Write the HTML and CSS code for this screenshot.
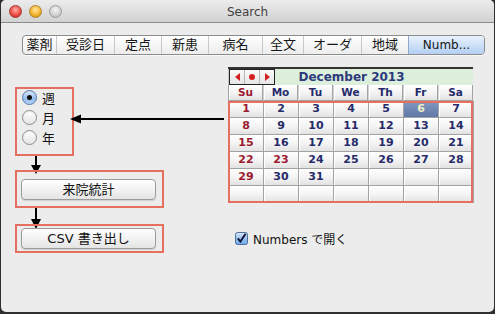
FILE: index.html
```html
<!DOCTYPE html>
<html lang="ja">
<head>
<meta charset="utf-8">
<title>Search</title>
<link rel="stylesheet" href="styles.css">
</head>
<body>
<div class="window">
  <div class="titlebar">
    <div class="lights">
      <span class="light red"></span>
      <span class="light yellow"></span>
      <span class="light gray"></span>
    </div>
    <div class="title">Search</div>
    <div></div>
  </div>
  <div class="content">
    <div class="tabs">
      <div class="seg">薬剤</div>
      <div class="seg">受診日</div>
      <div class="seg">定点</div>
      <div class="seg">新患</div>
      <div class="seg">病名</div>
      <div class="seg">全文</div>
      <div class="seg">オーダ</div>
      <div class="seg">地域</div>
      <div class="seg seg-sel">Numb...</div>
    </div>
    <div class="main">
      <div class="left">
        <div class="radio-row">
          <div class="box radios">
            <div class="radio-item"><span class="radio radio-on"><span class="dot"></span></span><span>週</span></div>
            <div class="radio-item"><span class="radio"></span><span>月</span></div>
            <div class="radio-item"><span class="radio"></span><span>年</span></div>
          </div>
          <svg class="arrow-h" width="154" height="12" viewBox="0 0 154 12">
            <line x1="9" y1="6" x2="154" y2="6" stroke="#000" stroke-width="2"/>
            <polygon points="0,6 11,1.5 11,10.5" fill="#000"/>
          </svg>
        </div>
        <svg class="arrow-v" width="12" height="14" viewBox="0 0 12 14">
          <line x1="6" y1="0" x2="6" y2="10" stroke="#000" stroke-width="2"/>
          <polygon points="1,9 11,9 6,18" fill="#000"/>
        </svg>
        <div class="box btnbox1"><button class="btn">来院統計</button></div>
        <svg class="arrow-v arrow-v2" width="12" height="16" viewBox="0 0 12 16">
          <line x1="6" y1="0" x2="6" y2="12" stroke="#000" stroke-width="2"/>
          <polygon points="1,11 11,11 6,21" fill="#000"/>
        </svg>
        <div class="box btnbox2"><button class="btn">CSV 書き出し</button></div>
      </div>
      <div class="right">
        <div class="calendar">
          <div class="cal-head">
            <div class="nav">
              <span class="nav-btn"><svg width="5" height="8" viewBox="0 0 5 8"><polygon points="0,4 5,0 5,8" fill="#d42020"/></svg></span>
              <span class="nav-btn"><svg width="6" height="6" viewBox="0 0 6 6"><circle cx="3" cy="3" r="3" fill="#d42020"/></svg></span>
              <span class="nav-btn"><svg width="5" height="8" viewBox="0 0 5 8"><polygon points="0,0 5,4 0,8" fill="#d42020"/></svg></span>
            </div>
            <div class="month">December 2013</div>
          </div>
          <div class="dow">
            <div class="dcell sun">Su</div>
            <div class="dcell">Mo</div>
            <div class="dcell">Tu</div>
            <div class="dcell">We</div>
            <div class="dcell">Th</div>
            <div class="dcell">Fr</div>
            <div class="dcell">Sa</div>
          </div>
          <div class="weeks">
            <div class="cell sun">1</div><div class="cell">2</div><div class="cell">3</div><div class="cell">4</div><div class="cell">5</div><div class="cell sel">6</div><div class="cell">7</div>
            <div class="cell sun">8</div><div class="cell">9</div><div class="cell">10</div><div class="cell">11</div><div class="cell">12</div><div class="cell">13</div><div class="cell">14</div>
            <div class="cell sun">15</div><div class="cell">16</div><div class="cell">17</div><div class="cell">18</div><div class="cell">19</div><div class="cell">20</div><div class="cell">21</div>
            <div class="cell sun">22</div><div class="cell sun">23</div><div class="cell">24</div><div class="cell">25</div><div class="cell">26</div><div class="cell">27</div><div class="cell">28</div>
            <div class="cell sun">29</div><div class="cell">30</div><div class="cell">31</div><div class="cell"></div><div class="cell"></div><div class="cell"></div><div class="cell"></div>
            <div class="cell"></div><div class="cell"></div><div class="cell"></div><div class="cell"></div><div class="cell"></div><div class="cell"></div><div class="cell"></div>
          </div>
        </div>
        <label class="check">
          <svg width="13" height="13" viewBox="0 0 13 13">
            <defs>
              <linearGradient id="cbg" x1="0" y1="0" x2="0" y2="1">
                <stop offset="0" stop-color="#d8e9fc"/>
                <stop offset="0.5" stop-color="#9cc4f2"/>
                <stop offset="1" stop-color="#6ea6e8"/>
              </linearGradient>
            </defs>
            <rect x="0.5" y="0.5" width="12" height="12" rx="2" fill="url(#cbg)" stroke="#4f6f9c"/>
            <path d="M2.8 6.4 L5.4 9.6 L10.6 1.8" fill="none" stroke="#14183a" stroke-width="2"/>
          </svg>
          <span>Numbers で開く</span>
        </label>
      </div>
    </div>
  </div>
</div>
</body>
</html>
```

FILE: styles.css
```css
* { box-sizing: border-box; }

body {
  margin: 0;
  width: 495px;
  height: 314px;
  overflow: hidden;
  background: #2f2f2f;
  font-family: "DejaVu Sans", "Noto Sans CJK JP", sans-serif;
  font-size: 12px;
  color: #111;
}

.window {
  margin-left: 1px;
  width: 493px;
  height: 312px;
  background: #ececec;
  border-radius: 5px;
  overflow: hidden;
}

.titlebar {
  height: 23px;
  border-bottom: 1px solid #8a8a8a;
  background: linear-gradient(#ececec, #d2d2d2);
  display: grid;
  grid-template-columns: 1fr auto 1fr;
  align-items: center;
}

.lights {
  display: flex;
  gap: 7px;
  padding-left: 8px;
}

.light {
  width: 13px;
  height: 13px;
  border-radius: 50%;
  display: block;
}

.red {
  background: radial-gradient(circle at 50% 35%, #ffb0a8 0, #ee4f45 55%, #b8251e 100%);
  border: 1px solid #a8352d;
}

.yellow {
  background: radial-gradient(circle at 50% 35%, #ffe9a0 0, #f4b430 55%, #c08412 100%);
  border: 1px solid #b0832a;
}

.gray {
  background: radial-gradient(circle at 50% 35%, #f4f4f4 0, #d0d0d0 60%, #b2b2b2 100%);
  border: 1px solid #9a9a9a;
}

.title {
  font-size: 12px;
  color: #3f3f3f;
  padding-top: 1px;
}

.content {
  padding-top: 12px;
}

.tabs {
  margin-left: 21px;
  width: 463px;
  height: 20px;
  display: grid;
  grid-template-columns: 33px 58px 47px 47px 54px 41px 58px 47px 76px;
  border: 1px solid #8c8c8c;
  border-radius: 4px;
  overflow: hidden;
  background: linear-gradient(#ffffff, #ededed);
  box-shadow: 0 1px 0 rgba(255, 255, 255, 0.7);
}

.seg {
  display: flex;
  align-items: center;
  justify-content: center;
  font-size: 13px;
  line-height: 18px;
  border-left: 1px solid #c8c8c8;
  color: #161616;
}

.seg:first-child {
  border-left: none;
}

.seg-sel {
  font-size: 12px;
  background: linear-gradient(#e9f2fd, #b3cff3);
  border-left: 1px solid #8fa8cc;
}

.main {
  display: flex;
  margin-top: 12px;
  padding-left: 14px;
}

.left {
  width: 207px;
  display: flex;
  flex-direction: column;
  align-items: flex-start;
}

.radio-row {
  display: flex;
  align-items: flex-start;
  margin-top: 20px;
}

.box {
  border: 2px solid #e5705f;
}

.radios {
  width: 59px;
  height: 69px;
  padding-left: 5px;
  display: flex;
  flex-direction: column;
  gap: 4px;
}

.radio-item {
  height: 16px;
  display: flex;
  align-items: center;
  gap: 5px;
  font-size: 13px;
}

.radio {
  width: 15px;
  height: 15px;
  border-radius: 50%;
  border: 1px solid #8e8e8e;
  background: linear-gradient(#ffffff, #e4e4e4);
  box-shadow: inset 0 1px 1px rgba(0, 0, 0, 0.08);
  display: flex;
  align-items: center;
  justify-content: center;
}

.radio-on {
  border-color: #5578a8;
  background: linear-gradient(#dcebfc, #93bdef 60%, #b6d4f6);
}

.dot {
  width: 5px;
  height: 5px;
  border-radius: 50%;
  background: #111;
}

.arrow-h {
  display: block;
  overflow: visible;
  margin-left: -4px;
  margin-top: 26px;
}

.arrow-v {
  display: block;
  overflow: visible;
  margin-left: 15px;
}

.btnbox1 {
  width: 149px;
  height: 38px;
  padding: 7px 6px 6px 4px;
}

.btnbox2 {
  width: 149px;
  height: 29px;
  padding: 2px 6px 2px 4px;
}

.btn {
  display: block;
  width: 135px;
  height: 21px;
  margin: 0;
  padding: 0;
  border: 1px solid #9b9b9b;
  border-radius: 4px;
  background: linear-gradient(#ffffff, #f2f2f2 50%, #e4e4e4);
  box-shadow: 0 1px 1px rgba(0, 0, 0, 0.12);
  font-family: "DejaVu Sans", "Noto Sans CJK JP", sans-serif;
  font-size: 13px;
  line-height: 19px;
  color: #111;
}

.right {
  margin-left: 6px;
}

.calendar {
  width: 245px;
  border-top: 2px solid #333;
}

.cal-head {
  height: 16px;
  display: grid;
  grid-template-columns: 1fr;
  background: #dcefdd;
  border-left: 1px solid #c9c9c9;
}

.nav {
  grid-row: 1;
  grid-column: 1;
  width: 46px;
  height: 16px;
  display: flex;
  border: 1px solid #222;
  background: linear-gradient(#fafafa, #e6e6e6);
}

.nav-btn {
  flex: 1;
  display: flex;
  align-items: center;
  justify-content: center;
  border-left: 1px solid #b9b9b9;
}

.nav-btn:first-child {
  border-left: none;
}

.month {
  grid-row: 1;
  grid-column: 1;
  justify-self: center;
  font-weight: bold;
  font-size: 12px;
  line-height: 16px;
  color: #2d3a7c;
  padding-left: 1px;
}

.dow {
  display: grid;
  grid-template-columns: repeat(7, 35px);
  height: 16px;
}

.dcell,
.cell {
  border-right: 1px solid #a3a3a3;
  border-bottom: 1px solid #a3a3a3;
  background: linear-gradient(#ffffff, #f3f3f3 55%, #e2e2e2);
  box-shadow: inset 1px 1px 0 #ffffff;
  text-align: center;
  font-weight: bold;
  font-size: 11px;
  color: #262b69;
}

.dcell {
  line-height: 15px;
  font-size: 10.5px;
  border-left: 1px solid #d0d0d0;
}

.dcell:first-child {
  border-left: 1px solid #a3a3a3;
}

.weeks {
  display: grid;
  grid-template-columns: repeat(7, 35px);
  grid-template-rows: repeat(6, 17px);
  outline: 2px solid #e5705f;
  outline-offset: -2px;
  border-left: 1px solid #a3a3a3;
}

.cell {
  line-height: 16px;
}

.sun {
  color: #9c1b30;
}

.sel {
  background: linear-gradient(#8299c2, #6078a6);
  color: #f2efc6;
  box-shadow: none;
}

.check {
  display: flex;
  align-items: center;
  gap: 5px;
  margin: 28px 0 0 7px;
  height: 14px;
  font-size: 12px;
  color: #111;
}

.check svg {
  display: block;
}
```
